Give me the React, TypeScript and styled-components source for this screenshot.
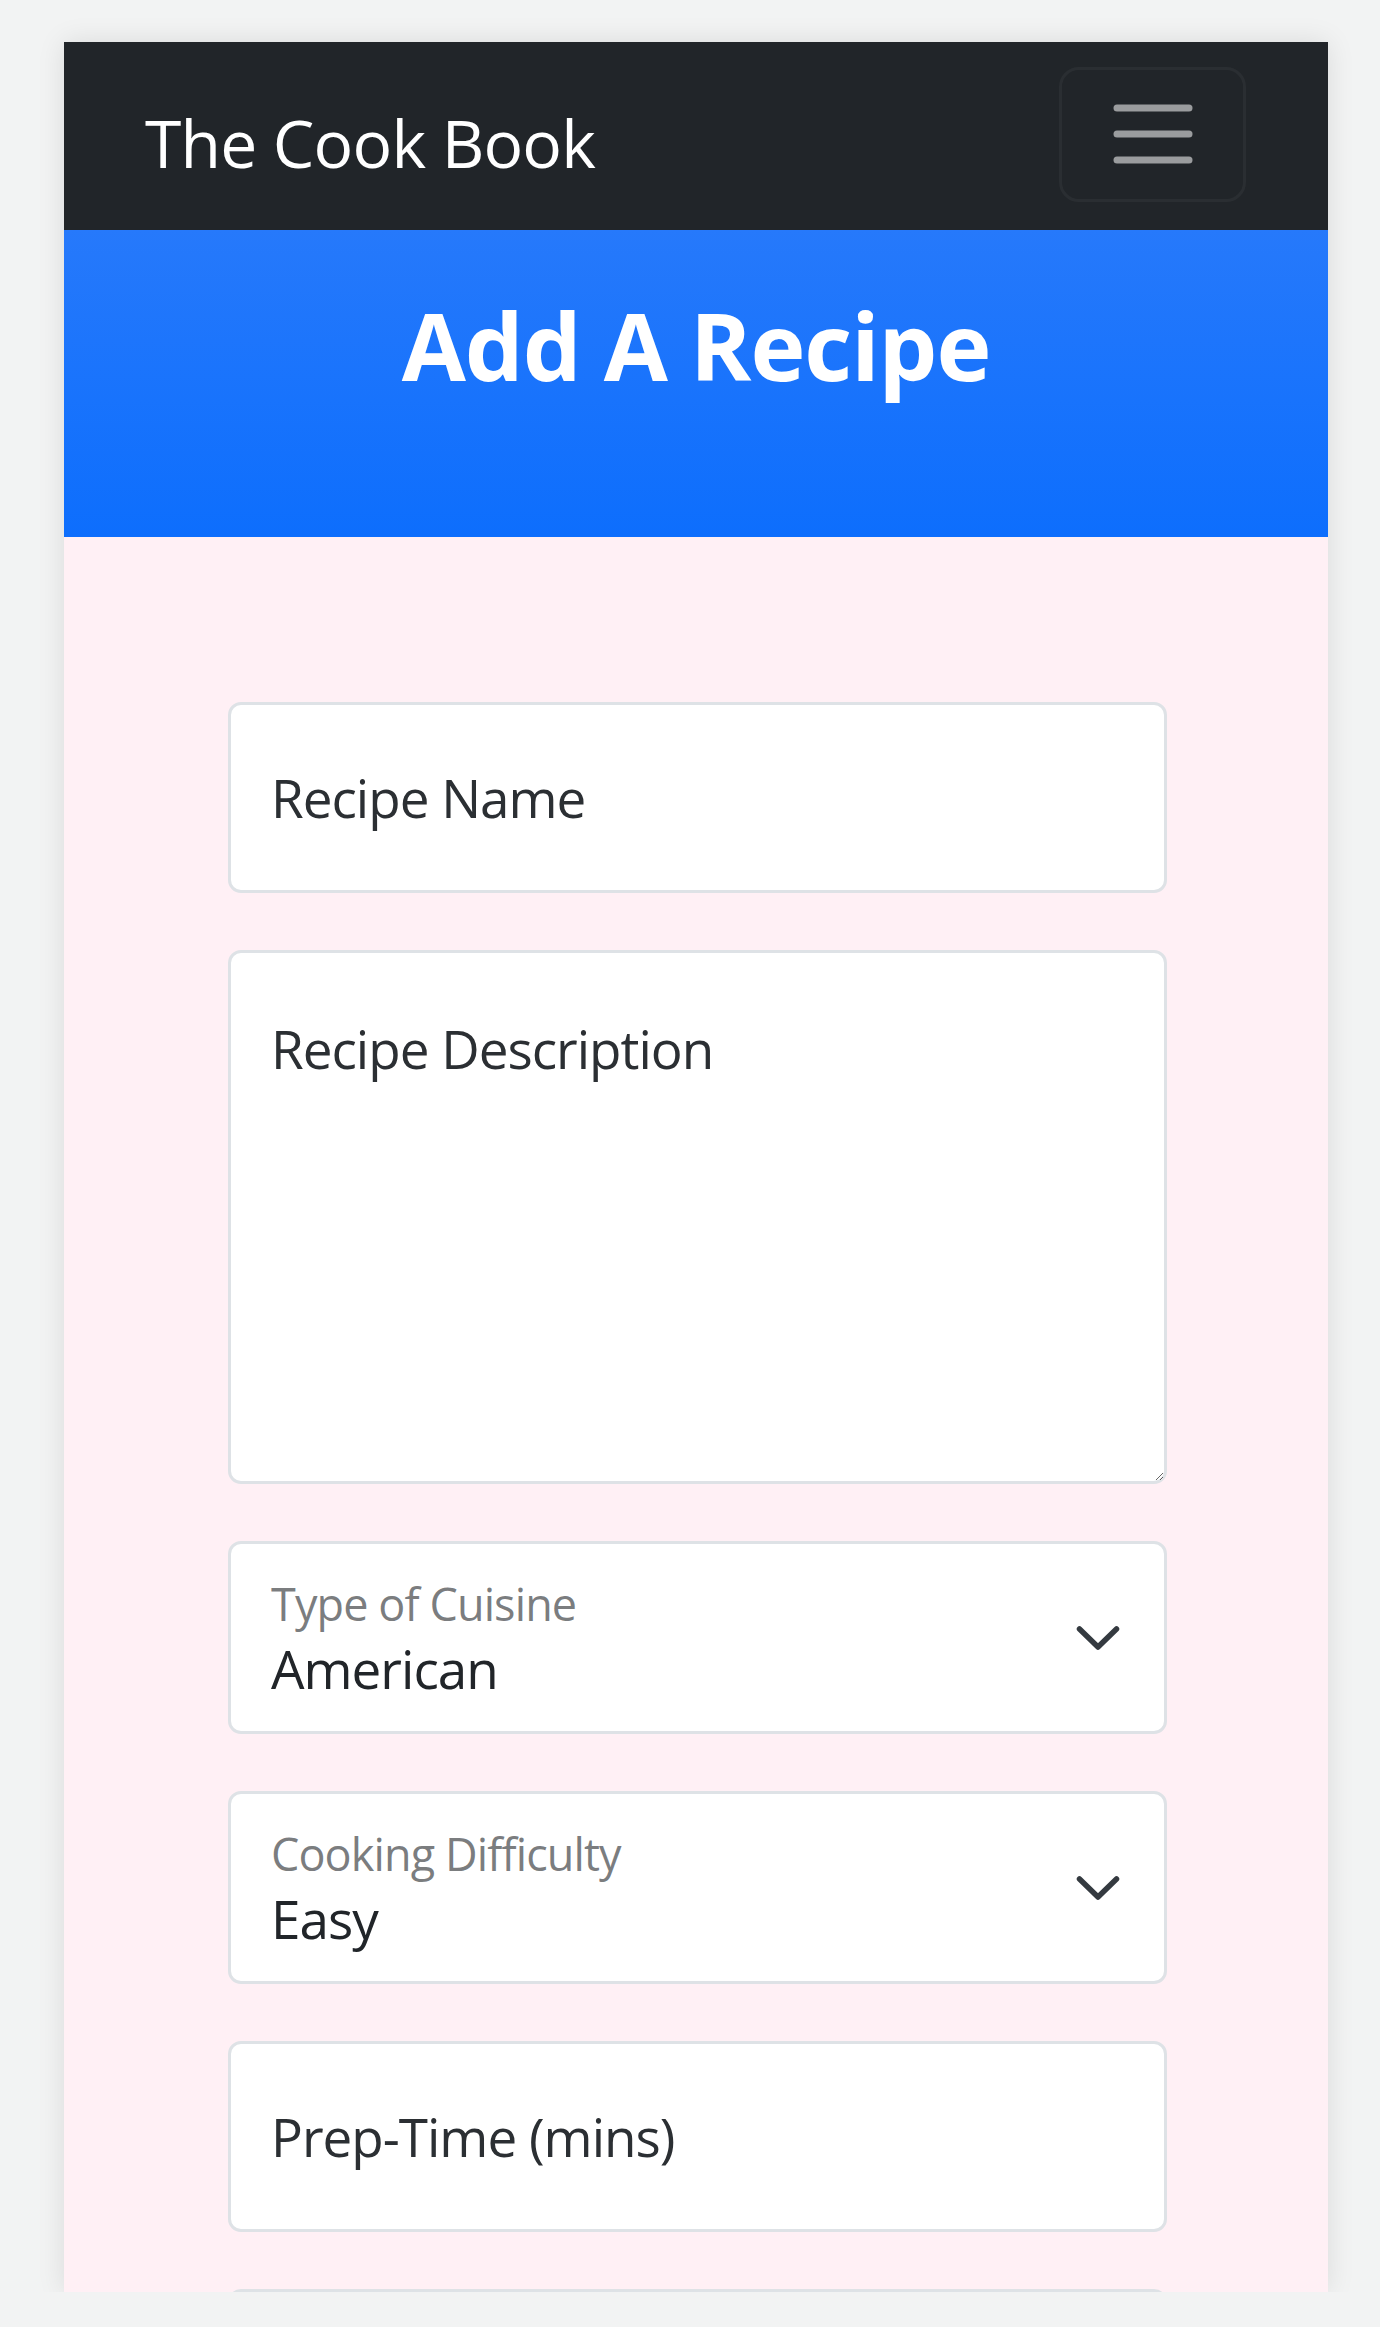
import * as React from "react"
import styled, { createGlobalStyle } from "styled-components"

const GlobalStyle = createGlobalStyle`
  body {
    margin: 0;
    background: #f2f3f3;
    font-family: "Open Sans", "Noto Sans", "Liberation Sans", sans-serif;
  }
`

const Frame = styled.div`
  width: 1264px;
  height: 2250px;
  margin: 42px 0 0 64px;
  overflow: hidden;
  background: #fff0f5;
  box-shadow: 0 0 26px rgba(0, 0, 0, 0.1);
`

const Navbar = styled.nav`
  height: 188px;
  box-sizing: border-box;
  background: #212529;
  display: flex;
  align-items: center;
  justify-content: space-between;
  padding: 0 82px 0 81px;
`

const Brand = styled.a`
  color: #fff;
  font-size: 66px;
  text-decoration: none;
  letter-spacing: -0.8px;
  margin-top: 12px;
`

const Toggler = styled.button`
  width: 187px;
  height: 135px;
  box-sizing: border-box;
  border: 3px solid rgba(255, 255, 255, 0.045);
  border-radius: 20px;
  background: transparent;
  display: flex;
  align-items: center;
  justify-content: center;
  padding: 0;
  margin-top: -4px;
`

const Hero = styled.header`
  height: 307px;
  box-sizing: border-box;
  background: linear-gradient(180deg, #2679fb 0%, #0d6efd 100%);
  padding-top: 60px;
`

const Title = styled.h1`
  margin: 0;
  text-align: center;
  color: #fff;
  font-size: 93px;
  font-weight: 700;
  line-height: 1.2;
  letter-spacing: -1px;
`

const Form = styled.form`
  display: flex;
  flex-direction: column;
  gap: 57px;
  padding: 165px 161px 0 164px;
`

const fieldBase = `
  display: block;
  width: 100%;
  box-sizing: border-box;
  border: 3px solid #dee2e6;
  border-radius: 13px;
  background: #fff;
  color: #212529;
  font-family: inherit;
  font-size: 53px;
  letter-spacing: -1px;
  outline: none;
  margin: 0;
`

const TextInput = styled.input`
  ${fieldBase}
  height: 191px;
  padding: 0 40px;
  &::placeholder {
    color: #2b2f33;
    opacity: 1;
  }
`

const TextArea = styled.textarea<{ $height: number }>`
  ${fieldBase}
  height: ${(p) => p.$height}px;
  padding: 56px 40px 0;
  line-height: 1.5;
  resize: vertical;
  &::placeholder {
    color: #2b2f33;
    opacity: 1;
  }
`

const SelectWrap = styled.div`
  position: relative;
`

const Select = styled.select`
  ${fieldBase}
  height: 193px;
  padding: 62px 130px 0 40px;
  appearance: none;
  -webkit-appearance: none;
`

const FloatLabel = styled.label`
  position: absolute;
  top: 29px;
  left: 43px;
  font-size: 45px;
  letter-spacing: -0.9px;
  line-height: 1.5;
  color: rgba(33, 37, 41, 0.6);
  pointer-events: none;
`

const Chevron = styled.svg`
  position: absolute;
  right: 47px;
  top: 50%;
  transform: translateY(-50%);
  pointer-events: none;
`

const Hamburger = () => (
  <svg width="80" height="60" viewBox="0 0 80 60">
    <g stroke="rgba(255,255,255,0.55)" strokeWidth="7" strokeLinecap="round">
      <line x1="4" y1="4" x2="76" y2="4" />
      <line x1="4" y1="30" x2="76" y2="30" />
      <line x1="4" y1="56" x2="76" y2="56" />
    </g>
  </svg>
)

const SelectField = ({ label, options }: { label: string; options: string[] }) => (
  <SelectWrap>
    <Select defaultValue={options[0]}>
      {options.map((o) => (
        <option key={o}>{o}</option>
      ))}
    </Select>
    <FloatLabel>{label}</FloatLabel>
    <Chevron width="44" height="26" viewBox="0 0 44 26">
      <polyline
        points="3.5,4 22,22 40.5,4"
        fill="none"
        stroke="#343a40"
        strokeWidth="5.5"
        strokeLinecap="round"
        strokeLinejoin="round"
      />
    </Chevron>
  </SelectWrap>
)

const App = (): React.ReactElement => {
  return (
    <>
      <GlobalStyle />
      <Frame>
        <Navbar>
          <Brand href="#">The Cook Book</Brand>
          <Toggler type="button" aria-label="Toggle navigation">
            <Hamburger />
          </Toggler>
        </Navbar>
        <Hero>
          <Title>Add A Recipe</Title>
        </Hero>
        <Form onSubmit={(e) => e.preventDefault()}>
          <TextInput placeholder="Recipe Name" />
          <TextArea $height={534} placeholder="Recipe Description" />
          <SelectField label="Type of Cuisine" options={["American", "Italian", "Mexican", "Chinese", "Indian"]} />
          <SelectField label="Cooking Difficulty" options={["Easy", "Medium", "Hard"]} />
          <TextInput placeholder="Prep-Time (mins)" />
          <TextInput placeholder="Cook-Time (mins)" />
        </Form>
      </Frame>
    </>
  )
}

export default App
